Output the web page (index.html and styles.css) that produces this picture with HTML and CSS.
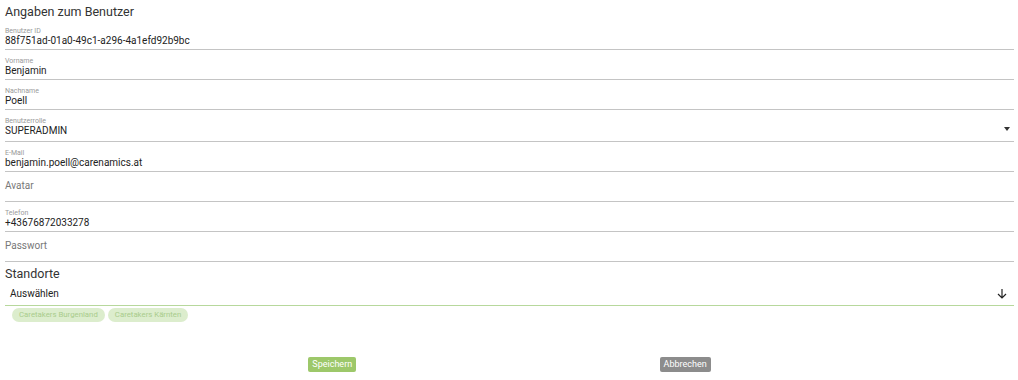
FILE: index.html
```html
<!DOCTYPE html>
<html lang="de">
<head>
    <meta charset="UTF-8">
    <title>Benutzer</title>
    <link rel="stylesheet" href="styles.css">
</head>
<body>
    <h2 class="title">Angaben zum Benutzer</h2>
    <div class="field">
        <label class="small">Benutzer ID</label>
        <div class="value">88f751ad-01a0-49c1-a296-4a1efd92b9bc</div>
    </div>
    <div class="field">
        <label class="small">Vorname</label>
        <div class="value">Benjamin</div>
    </div>
    <div class="field">
        <label class="small">Nachname</label>
        <div class="value">Poell</div>
    </div>
    <div class="field select">
        <label class="small">Benutzerrolle</label>
        <div class="value">SUPERADMIN</div>
        <span class="caret"></span>
    </div>
    <div class="field">
        <label class="small">E-Mail</label>
        <div class="value">benjamin.poell@carenamics.at</div>
    </div>
    <div class="field empty">
        <div class="placeholder">Avatar</div>
    </div>
    <div class="field">
        <label class="small">Telefon</label>
        <div class="value">+43676872033278</div>
    </div>
    <div class="field empty">
        <div class="placeholder">Passwort</div>
    </div>

    <h2 class="title sub">Standorte</h2>
    <div class="picker">
        <span>Auswählen</span>
        <svg width="12" height="12" viewBox="0 0 12 12"><path d="M6 1v9M2 6l4 4 4-4" fill="none" stroke="#222" stroke-width="1.2"/></svg>
    </div>
    <div class="chips">
        <span class="chip">Caretakers Burgenland</span>
        <span class="chip">Caretakers Kärnten</span>
    </div>

    <div class="actions">
        <button class="btn save">Speichern</button>
        <button class="btn cancel">Abbrechen</button>
    </div>
</body>
</html>
```
FILE: styles.css
```css
*{
    margin: 0;
    padding: 0;
    box-sizing: border-box;
}
body{
    font-family: Roboto, "Liberation Sans", sans-serif;
    color: #222;
    padding: 0 4px 0 5px;
    background: #fff;
}
.title{
    font-weight: 400;
    font-size: 12.5px;
    color: #333;
    height: 20px;
    line-height: 16px;
    padding-top: 4px;
}
.field{
    position: relative;
    height: 30px;
    border-bottom: 1px solid #c4c4c4;
    padding-top: 7px;
}
.select{
    height: 32px;
}
.small{
    display: block;
    font-size: 7px;
    line-height: 8px;
    color: #9a9a9a;
}
.value{
    font-size: 10px;
    line-height: 12px;
    color: #222;
}
.placeholder{
    font-size: 10px;
    line-height: 12px;
    color: #777;
    padding-top: 1px;
}
.caret{
    position: absolute;
    right: 4px;
    top: 17px;
    border-left: 3px solid transparent;
    border-right: 3px solid transparent;
    border-top: 4px solid #333;
}
.picker{
    display: flex;
    justify-content: space-between;
    align-items: center;
    height: 24px;
    padding: 0 6px 0 5px;
    font-size: 10px;
    line-height: 12px;
    border-bottom: 1px solid #b7d89c;
}
.chips{
    display: flex;
    gap: 3px;
    padding: 2px 0 0 7px;
}
.chip{
    background: #dcedcd;
    color: #a9cc8c;
    font-size: 7.8px;
    line-height: 14px;
    padding: 0 7px;
    border-radius: 7px;
}
.actions{
    display: flex;
    justify-content: space-evenly;
    margin-top: 35px;
}
.btn{
    border: none;
    color: #fff;
    font-family: Roboto, "Liberation Sans", sans-serif;
    font-size: 9px;
    line-height: 15px;
    padding: 0 4px;
    border-radius: 2px;
}
.save{
    background: #9dc86a;
}
.cancel{
    background: #8c8c8c;
}
```
